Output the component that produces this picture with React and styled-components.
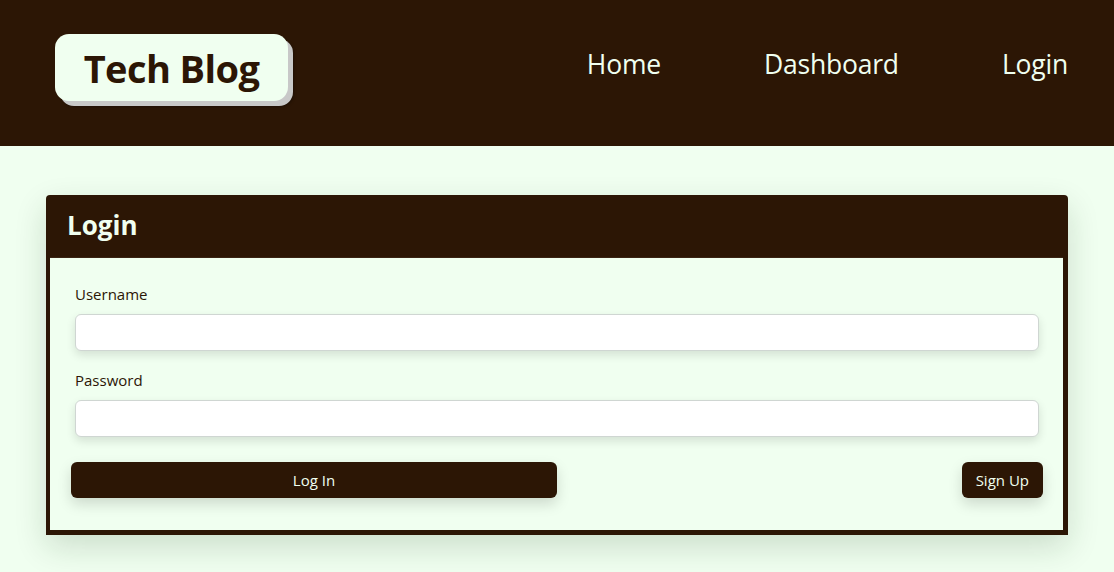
import React from "react";
import styled, { createGlobalStyle } from "styled-components";

const Global = createGlobalStyle`
  html, body { margin: 0; padding: 0; }
  body {
    background: #f0fff0;
    font-family: "Open Sans", "Noto Sans", sans-serif;
    color: #2c1605;
  }
  * { box-sizing: border-box; }
`;

const Header = styled.header`
  height: 146px;
  background: #2c1605;
  display: flex;
  align-items: flex-start;
  justify-content: space-between;
  padding: 34px 46px 0 55px;
`;

const Logo = styled.h1`
  margin: 0;
  width: 233px;
  height: 67px;
  display: flex;
  align-items: center;
  justify-content: center;
  background: #f0fff0;
  color: #2c1605;
  border-radius: 14px;
  box-shadow: 5px 5px 0 #c8c8c8, 6px 6px 3px rgba(0,0,0,0.3);
  font-size: 38px;
  font-weight: 700;
  letter-spacing: -0.6px;
`;

const Nav = styled.nav`
  display: flex;
  gap: 103px;
  padding-top: 12px;
`;

const NavLink = styled.a`
  color: #f0fff0;
  font-size: 26.5px;
  letter-spacing: -0.2px;
  text-decoration: none;
  line-height: 36px;
`;

const Main = styled.main`
  padding: 49px 46px 40px 46px;
`;

const Card = styled.section`
  background: #2c1605;
  border-radius: 4px 4px 0 0;
  padding: 0 5px 5px 4px;
  box-shadow: 0 12px 32px rgba(20, 50, 20, 0.16);
`;

const CardHeader = styled.div`
  height: 63px;
  display: flex;
  align-items: center;
  padding: 0 0 3px 17px;
  color: #f0fff0;
  font-size: 26px;
  font-weight: 700;
  border-bottom: 1px solid #3a2414;
`;

const CardBody = styled.form`
  background: #f0fff0;
  padding: 26px 24px 32px 25px;
  display: flex;
  flex-direction: column;
`;

const Label = styled.label`
  font-size: 15px;
  line-height: 20px;
  margin-bottom: 10px;
  color: #2c1605;
`;

const Input = styled.input`
  height: 37px;
  background: #fff;
  border: 1px solid #cfd6d2;
  border-radius: 6px;
  box-shadow: 0 4px 10px rgba(0,0,0,0.12);
  margin-bottom: ${(p) => p.$mb || 0}px;
  outline: none;
`;

const Buttons = styled.div`
  display: flex;
  justify-content: space-between;
  margin: 25px -4px 0 -4px;
`;

const Button = styled.button`
  height: 36px;
  width: ${(p) => p.$w || "auto"};
  padding: 0 14px;
  background: #2c1605;
  color: #f0fff0;
  border: none;
  border-radius: 6px;
  font-family: inherit;
  font-size: 15px;
  box-shadow: 0 6px 14px rgba(0,0,0,0.15);
`;

export default function App() {
  return (
    <>
      <Global />
      <Header>
        <Logo>Tech Blog</Logo>
        <Nav>
          <NavLink href="#">Home</NavLink>
          <NavLink href="#">Dashboard</NavLink>
          <NavLink href="#">Login</NavLink>
        </Nav>
      </Header>
      <Main>
        <Card>
          <CardHeader>Login</CardHeader>
          <CardBody onSubmit={(e) => e.preventDefault()}>
            <Label>Username</Label>
            <Input type="text" $mb={19} />
            <Label>Password</Label>
            <Input type="password" />
            <Buttons>
              <Button type="submit" $w="486px">Log In</Button>
              <Button type="button">Sign Up</Button>
            </Buttons>
          </CardBody>
        </Card>
      </Main>
    </>
  );
}
